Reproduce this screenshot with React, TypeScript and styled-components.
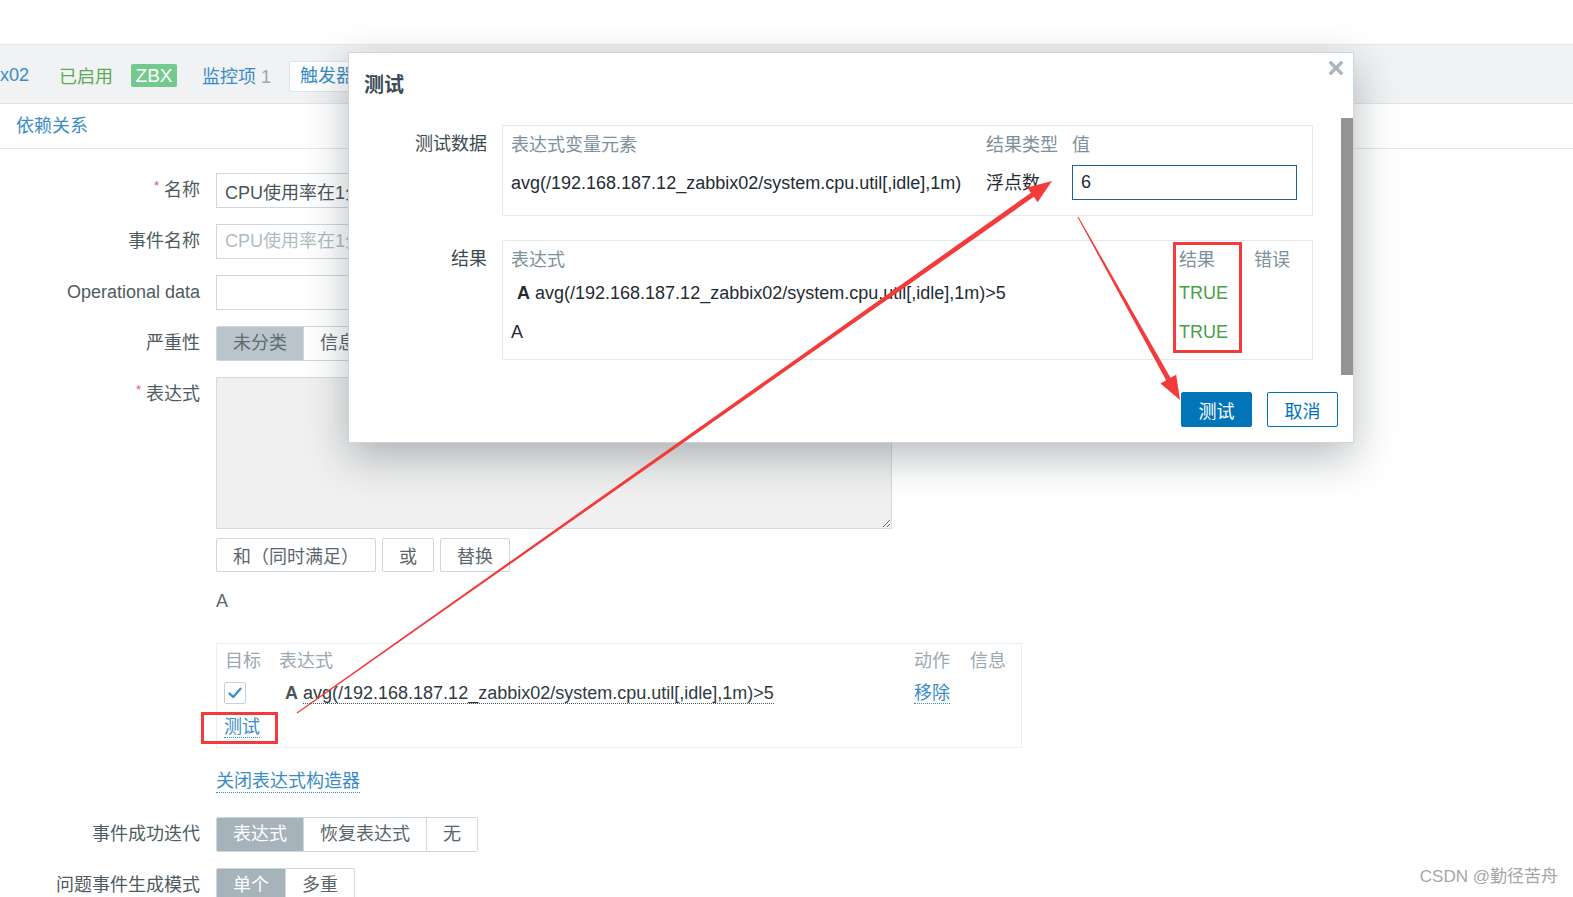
import React from "react";
import styled, { createGlobalStyle } from "styled-components";

const GlobalStyle = createGlobalStyle`
  html, body { margin: 0; padding: 0; background: #fff; }
  body {
    font-family: "Liberation Sans", Arial, "Noto Sans CJK SC", sans-serif;
    font-size: 18px;
    color: #1f2c33;
  }
  * { box-sizing: border-box; }
`;

const Page = styled.div`
  position: relative;
  width: 1573px;
  height: 897px;
  overflow: hidden;
  background: #fff;
`;

const TopGap = styled.div`
  height: 44px;
`;

const HostBar = styled.div`
  height: 60px;
  background: #f0f2f4;
  border-top: 1px solid #e3e6e9;
  border-bottom: 1px solid #e1e5e8;
  display: flex;
  align-items: center;
  white-space: nowrap;
  padding-top: 2px;
`;

const HostName = styled.span`
  color: #3a8cc6;
`;

const StatusOn = styled.span`
  margin-left: 30px;
  color: #5fa955;
`;

const Badge = styled.span`
  margin-left: 18px;
  height: 23px;
  width: 46px;
  line-height: 23px;
  text-align: center;
  background: #74c98f;
  color: #fff;
  border-radius: 2px;
  font-size: 19px;
`;

const NavLink = styled.span`
  margin-left: 25px;
  color: #3a8cc6;
`;

const Count = styled.span`
  margin-left: 5px;
  color: #97a8b1;
`;

const ActiveTab = styled.span`
  margin-left: 18px;
  margin-top: 2px;
  height: 31px;
  line-height: 29px;
  padding: 0 10px;
  background: #fff;
  border: 1px solid #dde3e6;
  border-radius: 2px;
  color: #3a8cc6;
`;

const TabRow = styled.div`
  height: 45px;
  border-bottom: 1px solid #e5e8eb;
  padding-left: 16px;
`;

const TabLink = styled.span`
  line-height: 44px;
  color: #3a8cc6;
`;

const Form = styled.div`
  display: flex;
  flex-direction: column;
`;

const FormRow = styled.div<{ $top: number }>`
  display: grid;
  grid-template-columns: 200px 806px;
  column-gap: 16px;
  margin-top: ${(p) => p.$top}px;
  align-items: start;
  justify-items: start;
`;

const Label = styled.div`
  justify-self: stretch;
  text-align: right;
  height: 35px;
  line-height: 35px;
  color: #505b61;
  white-space: nowrap;
`;

const Req = styled.span`
  color: #e45959;
  font-size: 13px;
  line-height: 0;
  vertical-align: 6px;
  margin-right: 5px;
`;

const TextInput = styled.input`
  display: block;
  width: 675px;
  height: 35px;
  border: 1px solid #cfd7dc;
  border-radius: 0;
  padding: 0 8px;
  font: inherit;
  color: #4a555b;
  background: #fff;
  &::placeholder {
    color: #b1bcc2;
  }
`;

const SegGroup = styled.div`
  display: flex;
  height: 35px;
  border: 1px solid #cfd7dc;
  border-radius: 2px;
  overflow: hidden;
  background: #fff;
`;

const SegItem = styled.span<{ $on?: boolean; $tone?: "muted" | "solid" }>`
  padding: 0 16px;
  line-height: 33px;
  white-space: nowrap;
  color: #5a656b;
  background: #fff;
  & + & {
    border-left: 1px solid #cfd7dc;
  }
  ${(p) =>
    p.$on && p.$tone === "muted" ? "background:#b9c5cb;color:#5f6b71;" : ""}
  ${(p) =>
    p.$on && p.$tone === "solid" ? "background:#a7b3ba;color:#ffffff;" : ""}
`;

const FieldColumn = styled.div`
  display: flex;
  flex-direction: column;
  align-items: flex-start;
`;

const ExprArea = styled.textarea`
  display: block;
  width: 676px;
  height: 152px;
  margin: 0;
  background: #f0f0f0;
  border: 1px solid #d6dbde;
  border-radius: 0;
  font: inherit;
  padding: 6px 8px;
  resize: both;
`;

const ButtonRow = styled.div`
  display: flex;
  gap: 6px;
  margin-top: 9px;
`;

const PlainButton = styled.button`
  height: 34px;
  padding: 0 16px;
  border: 1px solid #cfd7dc;
  border-radius: 2px;
  background: #fff;
  color: #5b666c;
  font: inherit;
`;

const ExprLetter = styled.div`
  margin-top: 18px;
  line-height: 22px;
  height: 22px;
  color: #5d676d;
`;

const TableBox = styled.div`
  position: relative;
  margin-top: 31px;
  width: 806px;
  border: 1px solid #ebeef0;
  padding: 5px 7px 6px 8px;
  display: grid;
  grid-template-columns: 54px 1fr 56px 44px;
  grid-template-rows: 24px 40px 28px;
  align-items: center;
`;

const HeadCell = styled.span`
  line-height: 24px;
  color: #9aa8b0;
  white-space: nowrap;
`;

const CheckBox = styled.span`
  width: 22px;
  height: 22px;
  border: 1px solid #c8d0d4;
  border-radius: 2px;
  background: #fff;
  display: flex;
  align-items: center;
  justify-content: center;
  margin-left: -1px;
`;

const ExprCell = styled.span`
  padding-left: 6px;
  white-space: nowrap;
  color: #2f3b41;
`;

const Letter = styled.b<{ $dark?: boolean }>`
  color: ${(p) => (p.$dark ? "#1f2c33" : "#4b555b")};
  margin-right: 5px;
`;

const Dotted = styled.span`
  border-bottom: 1px dotted #4b555b;
`;

const Link = styled.span`
  color: #3a8cc6;
  border-bottom: 1px dotted #3a8cc6;
  line-height: 22px;
  white-space: nowrap;
`;

const FullRow = styled.div`
  grid-column: 1 / -1;
  margin-left: -1px;
`;

const CloseBuilder = styled(Link)`
  margin-top: 22px;
`;

const RedMark = styled.div<{ $l: number; $t: number; $w: number; $h: number }>`
  position: absolute;
  left: ${(p) => p.$l}px;
  top: ${(p) => p.$t}px;
  width: ${(p) => p.$w}px;
  height: ${(p) => p.$h}px;
  border: 3px solid #f33b3b;
  pointer-events: none;
`;

/* ---------- modal ---------- */

const Modal = styled.div`
  position: absolute;
  left: 348px;
  top: 52px;
  width: 1006px;
  background: #fff;
  border: 1px solid #cfd6da;
  box-shadow: 0 14px 40px rgba(30, 42, 52, 0.32);
  padding-bottom: 15px;
  z-index: 5;
`;

const ModalTitle = styled.div`
  padding: 20px 15px 0;
  line-height: 24px;
  font-size: 20px;
  font-weight: bold;
  color: #3a4a56;
`;

const CloseX = styled.span`
  position: absolute;
  right: 10px;
  top: 8px;
  width: 14px;
  height: 14px;
  display: flex;
`;

const ScrollThumb = styled.div`
  position: absolute;
  right: 0;
  top: 65px;
  width: 12px;
  height: 257px;
  background: #939393;
`;

const ModalRow = styled.div<{ $top: number }>`
  display: grid;
  grid-template-columns: 138px 811px;
  column-gap: 15px;
  margin-top: ${(p) => p.$top}px;
  align-items: start;
`;

const ModalLabel = styled.div`
  text-align: right;
  line-height: 24px;
  padding-top: 7px;
  color: #3e4a50;
`;

const DataBox = styled.div`
  border: 1px solid #e5e9ec;
  padding: 7px 16px 15px 8px;
  display: grid;
  grid-template-columns: 475px 86px 225px;
  grid-template-rows: 24px 35px;
  row-gap: 8px;
  align-items: center;
`;

const ModalHead = styled.span`
  line-height: 24px;
  color: #7d909b;
  white-space: nowrap;
`;

const DataText = styled.span<{ $indent?: boolean }>`
  white-space: nowrap;
  line-height: 24px;
  color: #1f2c33;
  padding-left: ${(p) => (p.$indent ? 6 : 0)}px;
`;

const ValueInput = styled.input`
  width: 225px;
  height: 35px;
  border: 1px solid #1f6196;
  border-radius: 0;
  padding: 0 8px;
  font: inherit;
  color: #1f2c33;
  outline: none;
`;

const ResultBox = styled.div`
  position: relative;
  border: 1px solid #e5e9ec;
  padding: 6px 8px 8px 8px;
  display: grid;
  grid-template-columns: 668px 75px 1fr;
  grid-template-rows: 26px 40px 38px;
  align-items: center;
`;

const TrueText = styled.span`
  color: #45a148;
  line-height: 24px;
`;

const ModalFooter = styled.div`
  display: flex;
  justify-content: flex-end;
  gap: 15px;
  padding-right: 15px;
  margin-top: 32px;
`;

const DialogButton = styled.button<{ $primary?: boolean }>`
  width: 71px;
  height: 35px;
  border: 1px solid #0275b8;
  border-radius: 2px;
  font: inherit;
  background: ${(p) => (p.$primary ? "#0275b8" : "#fff")};
  color: ${(p) => (p.$primary ? "#fff" : "#0275b8")};
`;

const Watermark = styled.div`
  position: absolute;
  right: 15px;
  top: 866px;
  font-size: 17px;
  line-height: 22px;
  color: #a6a6a6;
  z-index: 6;
`;

const Annotation = styled.svg`
  position: absolute;
  left: 0;
  top: 0;
  pointer-events: none;
  z-index: 10;
`;

const expr = "avg(/192.168.187.12_zabbix02/system.cpu.util[,idle],1m)";

export default function App() {
  return (
    <>
      <GlobalStyle />
      <Page>
        <TopGap />
        <HostBar>
          <HostName>x02</HostName>
          <StatusOn>已启用</StatusOn>
          <Badge>ZBX</Badge>
          <NavLink>
            监控项<Count>1</Count>
          </NavLink>
          <ActiveTab>触发器 1</ActiveTab>
        </HostBar>
        <TabRow>
          <TabLink>依赖关系</TabLink>
        </TabRow>

        <Form>
          <FormRow $top={24}>
            <Label>
              <Req>*</Req>名称
            </Label>
            <TextInput readOnly value="CPU使用率在1分钟内大于5%" />
          </FormRow>
          <FormRow $top={16}>
            <Label>事件名称</Label>
            <TextInput readOnly placeholder="CPU使用率在1分钟内大于5%" />
          </FormRow>
          <FormRow $top={16}>
            <Label>Operational data</Label>
            <TextInput readOnly />
          </FormRow>
          <FormRow $top={16}>
            <Label>严重性</Label>
            <SegGroup>
              <SegItem $on $tone="muted">未分类</SegItem>
              <SegItem>信息</SegItem>
              <SegItem>警告</SegItem>
              <SegItem>一般严重</SegItem>
              <SegItem>严重</SegItem>
              <SegItem>灾难</SegItem>
            </SegGroup>
          </FormRow>
          <FormRow $top={16}>
            <Label>
              <Req>*</Req>表达式
            </Label>
            <FieldColumn>
              <ExprArea readOnly value="" />
              <ButtonRow>
                <PlainButton>和（同时满足）</PlainButton>
                <PlainButton>或</PlainButton>
                <PlainButton>替换</PlainButton>
              </ButtonRow>
              <ExprLetter>A</ExprLetter>
              <TableBox>
                <HeadCell>目标</HeadCell>
                <HeadCell>表达式</HeadCell>
                <HeadCell>动作</HeadCell>
                <HeadCell>信息</HeadCell>

                <CheckBox>
                  <svg width="16" height="16" viewBox="0 0 16 16">
                    <path
                      d="M2.5 8.5 L6.2 12 L13.5 3.8"
                      fill="none"
                      stroke="#3d8fc6"
                      strokeWidth="2.4"
                      strokeLinecap="round"
                      strokeLinejoin="round"
                    />
                  </svg>
                </CheckBox>
                <ExprCell>
                  <Letter>A</Letter>
                  <Dotted>{expr}&gt;5</Dotted>
                </ExprCell>
                <span>
                  <Link>移除</Link>
                </span>
                <span />

                <FullRow>
                  <Link>测试</Link>
                </FullRow>
                <RedMark $l={-16} $t={68} $w={77} $h={32} />
              </TableBox>
              <CloseBuilder>关闭表达式构造器</CloseBuilder>
            </FieldColumn>
          </FormRow>
          <FormRow $top={24}>
            <Label>事件成功迭代</Label>
            <SegGroup>
              <SegItem $on $tone="solid">表达式</SegItem>
              <SegItem>恢复表达式</SegItem>
              <SegItem>无</SegItem>
            </SegGroup>
          </FormRow>
          <FormRow $top={16}>
            <Label>问题事件生成模式</Label>
            <SegGroup>
              <SegItem $on $tone="solid">单个</SegItem>
              <SegItem>多重</SegItem>
            </SegGroup>
          </FormRow>
        </Form>

        <Modal>
          <ModalTitle>测试</ModalTitle>
          <CloseX>
            <svg width="14" height="14" viewBox="0 0 14 14">
              <path
                d="M2 2 L12 12 M12 2 L2 12"
                stroke="#aab5bb"
                strokeWidth="3.4"
                strokeLinecap="square"
              />
            </svg>
          </CloseX>
          <ScrollThumb />

          <ModalRow $top={28}>
            <ModalLabel>测试数据</ModalLabel>
            <DataBox>
              <ModalHead>表达式变量元素</ModalHead>
              <ModalHead>结果类型</ModalHead>
              <ModalHead>值</ModalHead>
              <DataText>{expr}</DataText>
              <DataText>浮点数</DataText>
              <ValueInput readOnly value="6" />
            </DataBox>
          </ModalRow>

          <ModalRow $top={24}>
            <ModalLabel>结果</ModalLabel>
            <ResultBox>
              <ModalHead>表达式</ModalHead>
              <ModalHead>结果</ModalHead>
              <ModalHead>错误</ModalHead>

              <DataText $indent>
                <Letter $dark>A</Letter>
                {expr}&gt;5
              </DataText>
              <TrueText>TRUE</TrueText>
              <span />

              <DataText>A</DataText>
              <TrueText>TRUE</TrueText>
              <span />
              <RedMark $l={670} $t={1} $w={69} $h={111} />
            </ResultBox>
          </ModalRow>

          <ModalFooter>
            <DialogButton $primary>测试</DialogButton>
            <DialogButton>取消</DialogButton>
          </ModalFooter>
        </Modal>

        <Watermark>CSDN @勤径苦舟</Watermark>

        <Annotation width="1573" height="897" viewBox="0 0 1573 897">
          <polygon
            fill="#f33b3b"
            points="297.35,713.49 1033.82,196.86 1037.56,202.18 1052,181 1027.2,187.46 1030.94,192.78 296.65,712.51"
          />
          <polygon
            fill="#f33b3b"
            points="1078.44,216.76 1170.49,377.82 1176.17,374.66 1180,400 1160.45,383.42 1166.13,380.26 1077.56,217.24"
          />
        </Annotation>
      </Page>
    </>
  );
}
